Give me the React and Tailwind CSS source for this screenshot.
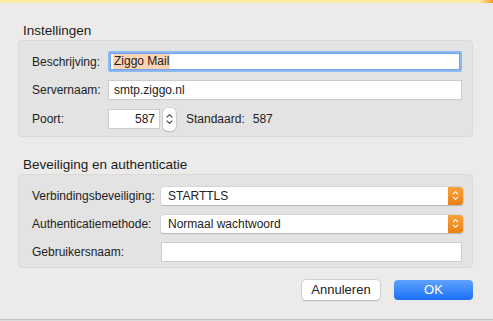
import React from "react";

function Chevrons({ color = "#555", w = 7, h = 12 }) {
  return (
    <svg width={w} height={h} viewBox="0 0 7 12" fill="none">
      <path d="M1 4.2 L3.5 1.7 L6 4.2" stroke={color} strokeWidth="1.1" strokeLinecap="round" strokeLinejoin="round" />
      <path d="M1 7.8 L3.5 10.3 L6 7.8" stroke={color} strokeWidth="1.1" strokeLinecap="round" strokeLinejoin="round" />
    </svg>
  );
}

function Select({ value }) {
  return (
    <div className="flex-1 h-[18px] flex bg-white rounded-[3px] shadow-[0_0_0_0.5px_#c8c8c8,0_1px_1px_rgba(0,0,0,0.25)]">
      <div className="flex-1 pl-[7px] flex items-center text-[12px] text-[#222]">{value}</div>
      <div className="w-[15px] h-full rounded-r-[3px] bg-gradient-to-b from-[#f7a23a] to-[#e9800e] flex items-center justify-center">
        <Chevrons color="#fff" w={7} h={11} />
      </div>
    </div>
  );
}

export default function App() {
  return (
    <div
      className="w-[493px] h-[321px] bg-[#ecebea] flex flex-col relative overflow-hidden text-[#222]"
      style={{ fontFamily: '"Liberation Sans", Arial, sans-serif' }}
    >
      <div className="h-[3px] bg-[#fbeea2] flex justify-end">
        <div className="w-[14px] h-[3px] bg-gradient-to-r from-[#fbeea2] to-[#f39a1e]" />
      </div>

      <div className="flex-1 flex flex-col px-[18px] mr-[2px]">
        <div className="mt-[20px] mb-[1px] pl-[5px] text-[13.5px] leading-[16px] text-[#1c1c1c]">Instellingen</div>
        <div className="bg-[#e3e3e3] border border-[#dadada] rounded-[4px] pt-[10px] pb-[5px] pl-[13px] pr-[10px] flex flex-col gap-[7px]">
          <div className="h-[21px] flex items-center">
            <div className="w-[76px] text-[12px]">Beschrijving:</div>
            <div className="flex-1 h-[21px] rounded-[2px] bg-[#8db8f4] p-[2px]">
              <div className="h-full bg-white border border-[#6fa2ea] flex items-center pl-[2px]">
                <span className="bg-[#fcd3b3] text-[12px] leading-[15px] px-[1px]">Ziggo Mail</span>
              </div>
            </div>
          </div>
          <div className="h-[21px] flex items-center">
            <div className="w-[76px] text-[12px]">Servernaam:</div>
            <div className="flex-1 h-[20px] bg-white border border-[#cdcdcd] flex items-center pl-[5px] text-[12px] mr-[0px]">
              smtp.ziggo.nl
            </div>
          </div>
          <div className="h-[24px] flex items-center">
            <div className="w-[76px] text-[12px]">Poort:</div>
            <div className="w-[52px] h-[20px] bg-white border border-[#cdcdcd] flex items-center justify-end pr-[4px] text-[12px]">587</div>
            <div className="ml-[3px] w-[13px] h-[23px] bg-white rounded-[5px] shadow-[0_0_0_0.5px_#bcbcbc,0_1px_1px_rgba(0,0,0,0.2)] flex items-center justify-center">
              <Chevrons color="#444" w={7} h={14} />
            </div>
            <div className="ml-[10px] text-[12px]">Standaard:</div>
            <div className="ml-[8px] text-[12px]">587</div>
          </div>
        </div>

        <div className="mt-[20px] mb-[1px] pl-[5px] text-[13.5px] leading-[16px] text-[#1c1c1c]">Beveiliging en authenticatie</div>
        <div className="bg-[#e3e3e3] border border-[#dadada] rounded-[4px] pt-[11px] pb-[6px] pl-[13px] pr-[9px] flex flex-col gap-[9px]">
          <div className="h-[19px] flex items-center">
            <div className="w-[129px] text-[12px]">Verbindingsbeveiliging:</div>
            <Select value="STARTTLS" />
          </div>
          <div className="h-[19px] flex items-center">
            <div className="w-[129px] text-[12px]">Authenticatiemethode:</div>
            <Select value="Normaal wachtwoord" />
          </div>
          <div className="h-[19px] flex items-center">
            <div className="w-[129px] text-[12px]">Gebruikersnaam:</div>
            <div className="flex-1 h-[20px] bg-white border border-[#cdcdcd] mr-[1px]" />
          </div>
        </div>

        <div className="mt-[12px] flex justify-end gap-[14px]">
          <div className="w-[78px] h-[20px] bg-white rounded-[4px] shadow-[0_0_0_0.5px_#b5b5b5,0_1px_1px_rgba(0,0,0,0.2)] flex items-center justify-center text-[13px] text-[#222]">
            Annuleren
          </div>
          <div className="w-[79px] h-[20px] rounded-[4px] bg-gradient-to-b from-[#5ea2fb] to-[#1a6ff8] flex items-center justify-center text-[13px] text-white">
            OK
          </div>
        </div>
      </div>

      <div className="h-[1px] bg-[#c2c2c2]" />
      <div className="h-[1px] bg-[#dcdcdc]" />
    </div>
  );
}
